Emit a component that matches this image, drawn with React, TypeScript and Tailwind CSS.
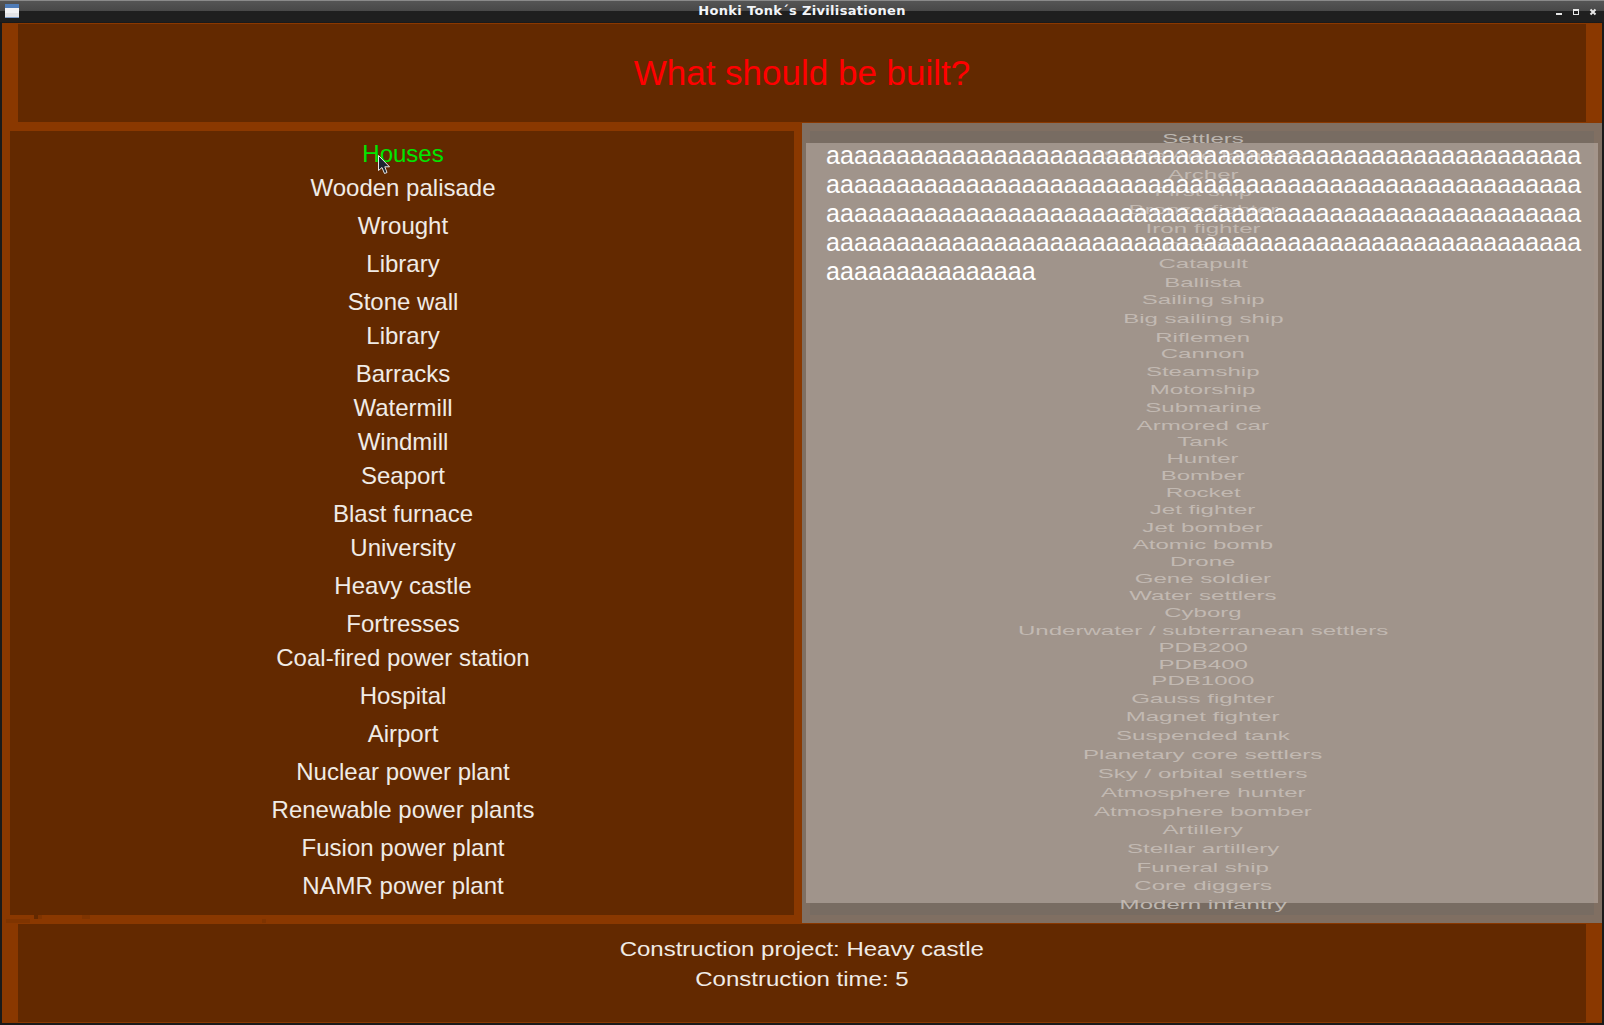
import React from 'react';

const SANS = "font-['Liberation_Sans',Arial,sans-serif]";

const buildings: [string, string][] = [
  ['Wooden palisade', 'h-[38px]'],
  ['Wrought', 'h-[38px]'],
  ['Library', 'h-[38px]'],
  ['Stone wall', 'h-[34px]'],
  ['Library', 'h-[38px]'],
  ['Barracks', 'h-[34px]'],
  ['Watermill', 'h-[34px]'],
  ['Windmill', 'h-[34px]'],
  ['Seaport', 'h-[38px]'],
  ['Blast furnace', 'h-[34px]'],
  ['University', 'h-[38px]'],
  ['Heavy castle', 'h-[38px]'],
  ['Fortresses', 'h-[34px]'],
  ['Coal-fired power station', 'h-[38px]'],
  ['Hospital', 'h-[38px]'],
  ['Airport', 'h-[38px]'],
  ['Nuclear power plant', 'h-[38px]'],
  ['Renewable power plants', 'h-[38px]'],
  ['Fusion power plant', 'h-[38px]'],
  ['NAMR power plant', 'h-[38px]'],
];

const units: [string, string][] = [
  ['Settlers', 'h-[17px]'],
  ['Stone Age farmers', 'h-[19px]'],
  ['Archer', 'h-[17px]'],
  ['First ship', 'h-[18px]'],
  ['Bronze fighter', 'h-[19px]'],
  ['Iron fighter', 'h-[18px]'],
  ['Chariot', 'h-[17px]'],
  ['Catapult', 'h-[19px]'],
  ['Ballista', 'h-[17px]'],
  ['Sailing ship', 'h-[19px]'],
  ['Big sailing ship', 'h-[19px]'],
  ['Riflemen', 'h-[16px]'],
  ['Cannon', 'h-[18px]'],
  ['Steamship', 'h-[18px]'],
  ['Motorship', 'h-[18px]'],
  ['Submarine', 'h-[18px]'],
  ['Armored car', 'h-[16px]'],
  ['Tank', 'h-[17px]'],
  ['Hunter', 'h-[17px]'],
  ['Bomber', 'h-[17px]'],
  ['Rocket', 'h-[17px]'],
  ['Jet fighter', 'h-[18px]'],
  ['Jet bomber', 'h-[17px]'],
  ['Atomic bomb', 'h-[17px]'],
  ['Drone', 'h-[17px]'],
  ['Gene soldier', 'h-[17px]'],
  ['Water settlers', 'h-[17px]'],
  ['Cyborg', 'h-[18px]'],
  ['Underwater / subterranean settlers', 'h-[17px]'],
  ['PDB200', 'h-[17px]'],
  ['PDB400', 'h-[16px]'],
  ['PDB1000', 'h-[18px]'],
  ['Gauss fighter', 'h-[18px]'],
  ['Magnet fighter', 'h-[19px]'],
  ['Suspended tank', 'h-[19px]'],
  ['Planetary core settlers', 'h-[19px]'],
  ['Sky / orbital settlers', 'h-[19px]'],
  ['Atmosphere hunter', 'h-[19px]'],
  ['Atmosphere bomber', 'h-[18px]'],
  ['Artillery', 'h-[19px]'],
  ['Stellar artillery', 'h-[19px]'],
  ['Funeral ship', 'h-[18px]'],
  ['Core diggers', 'h-[19px]'],
  ['Modern infantry', 'h-[17px]'],
];

const TitleBar = () => (
  <div className="relative flex h-[23px] shrink-0 items-center justify-center border-t border-[#8a8a8a] bg-[linear-gradient(#555_0,#484848_10px,#1f1f1f_10px,#1f1f1f_21px,#141414_22px)] pb-[3px]">
    <svg className="absolute left-[5px] top-[3px]" width="14" height="14" viewBox="0 0 14 14">
      <rect width="14" height="14" fill="#e4e4e6" />
      <rect width="14" height="4" fill="#4f7cb8" />
      <rect y="4" width="14" height="5" fill="#f2f2f4" />
      <rect y="13" width="14" height="1" fill="#7f9fcb" />
    </svg>
    <span className="font-['DejaVu_Sans',sans-serif] text-[13px] font-bold leading-none tracking-[0.33px] text-[#f2f4f8]">
      Honki Tonk´s Zivilisationen
    </span>
    <svg className="absolute left-[1555px] top-[7px]" width="44" height="9" viewBox="0 0 44 9" fill="none">
      <rect x="1" y="5" width="6" height="2" fill="#e6e6e6" />
      <rect x="18.5" y="1.5" width="5" height="5" stroke="#e6e6e6" />
      <rect x="18" y="1" width="6" height="2" fill="#e6e6e6" />
      <path d="M35.5 1.5l5 5M40.5 1.5l-5 5" stroke="#e6e6e6" strokeWidth="2" />
    </svg>
  </div>
);

const Cursor = () => (
  <svg className="absolute left-[378px] top-[155px] z-10" width="13" height="20" viewBox="0 0 13 20">
    <path d="M0.5 0.5V15.5L4 12.5L6.5 18.5L9 17.5L6.8 11.8H11.5Z" fill="#1c2430" stroke="#e8e8e8" strokeWidth="1" />
  </svg>
);

export default function App() {
  return (
    <div className={`relative flex h-[1025px] w-[1604px] flex-col overflow-hidden bg-[#1a1a1a] ${SANS}`}>
      <TitleBar />
      <div className="relative mx-[2px] flex h-[1000px] w-[1600px] flex-col bg-[#8a3800] pt-px">
        <div className="mx-4 flex h-[98px] shrink-0 items-center justify-center bg-[#632900] text-[35px] text-[#ff0000]">
          What should be built?
        </div>

        <div className="flex h-[802px] shrink-0 items-start">
          <div className="ml-2 mt-[9px] flex h-[784px] w-[784px] flex-col items-center bg-[#632900] pl-[2px] pt-[6px] text-[24px] leading-[34px] text-[#f0ebe6]">
            <div className="h-[34px] text-[#00e600]">Houses</div>
            {buildings.map(([name, height], i) => (
              <div key={i} className={height}>
                {name}
              </div>
            ))}
          </div>

          <div className="relative ml-2 mt-px h-[800px] w-[800px] bg-[#806f62] p-2">
            <div className="flex h-[784px] flex-col items-center bg-[#786c62] pl-[2px] pt-px">
              {units.map(([name, height], i) => (
                <div key={i} className={`${height} shrink-0 text-[13px] leading-[14px] text-[#bcb6b0]`}>
                  <span className="inline-block origin-center scale-x-[1.85] whitespace-nowrap">{name}</span>
                </div>
              ))}
            </div>
            <div className="absolute left-1 top-5 h-[760px] w-[792px] bg-[#c8bcb4]/50 pl-5 pr-2 text-[25px] leading-[29px] tracking-[0.08px] break-all text-white">
              <div className="-mt-[2px]">{'a'.repeat(231)}</div>
            </div>
          </div>
        </div>

        <div className="mx-4 flex h-[98px] shrink-0 flex-col items-center bg-[#632900] pt-[10px] text-[20px] leading-[30px] text-[#f0ebe6]">
          <span className="inline-block scale-x-[1.2] whitespace-nowrap">Construction project: Heavy castle</span>
          <span className="inline-block scale-x-[1.2] whitespace-nowrap">Construction time: 5</span>
        </div>

        <div className="absolute left-[32px] top-[892px] h-1 w-1 bg-[#632900]" />
        <div className="absolute left-[36px] top-[892px] h-1 w-1 bg-[#7f3400]" />
        <div className="absolute left-[80px] top-[892px] h-1 w-2 bg-[#7f3400]" />
        <div className="absolute left-[4px] top-[896px] h-1 w-6 bg-[#7f3400]" />
        <div className="absolute left-[260px] top-[896px] h-1 w-1 bg-[#7f3400]" />
      </div>
      <Cursor />
    </div>
  );
}
